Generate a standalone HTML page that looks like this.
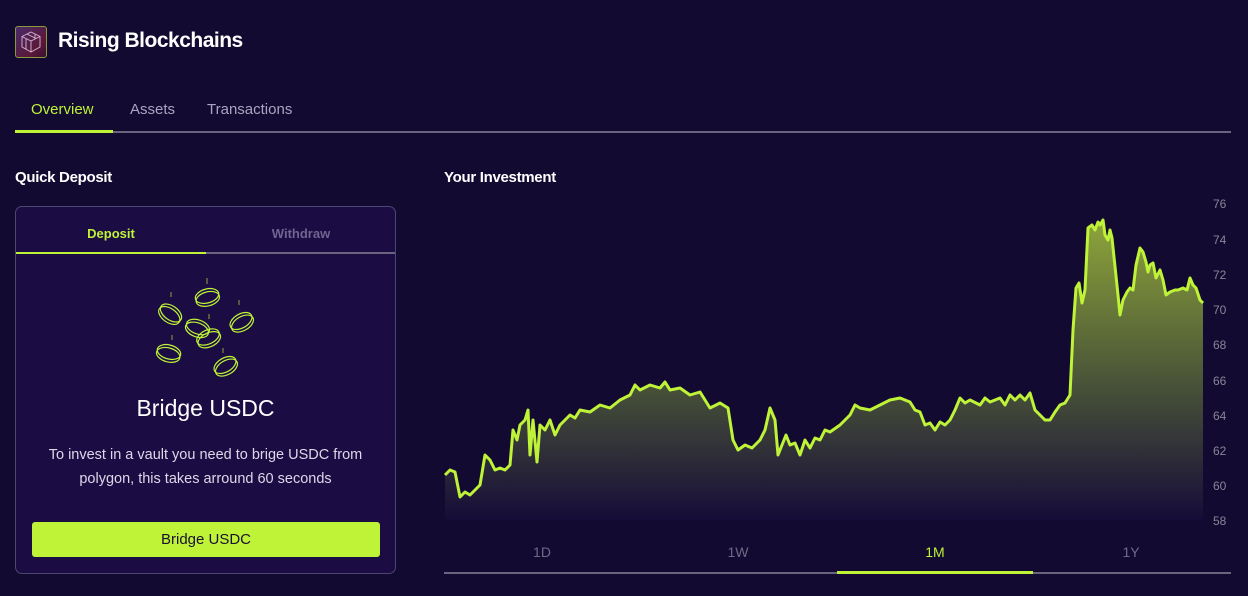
<!DOCTYPE html>
<html><head><meta charset="utf-8"><style>
*{margin:0;padding:0;box-sizing:border-box}
body{width:1248px;height:596px;background:#130a31;font-family:"Liberation Sans",sans-serif;color:#fff;position:relative;overflow:hidden}
.abs{position:absolute}
</style></head><body>
<div class="abs" style="left:15px;top:26px;width:32px;height:32px;border:1px solid #8a9a3a;border-radius:3px;background:linear-gradient(135deg,#4a2a6a,#5a1838 70%,#3a1030)">
<svg width="30" height="30" viewBox="0 0 30 30" fill="none" stroke="#d8b8d8" stroke-width="0.9"><path d="M15 5 L24 9.5 L24 20 L15 25 L6 20 L6 9.5 Z M6 9.5 L15 14 L24 9.5 M15 14 L15 25 M10 12 L10 22 M19 7 L19 12 M11 7 L20 11.5"/></svg></div>
<div class="abs" style="left:58px;top:29px;font-size:21px;font-weight:bold;letter-spacing:-0.5px">Rising Blockchains</div>
<div class="abs" style="left:31px;top:101px;font-size:15px;color:#bef337">Overview</div>
<div class="abs" style="left:130px;top:101px;font-size:15px;color:#a9a4c0">Assets</div>
<div class="abs" style="left:207px;top:101px;font-size:15px;color:#a9a4c0">Transactions</div>
<div class="abs" style="left:15px;top:131px;width:1216px;height:2px;background:#6a6480"></div>
<div class="abs" style="left:15px;top:130px;width:98px;height:3px;background:#bef337"></div>
<div class="abs" style="left:15px;top:169px;font-size:15px;font-weight:bold;letter-spacing:-0.3px">Quick Deposit</div>
<div class="abs" style="left:444px;top:169px;font-size:15px;font-weight:bold;letter-spacing:-0.3px">Your Investment</div>
<div class="abs" style="left:15px;top:206px;width:381px;height:368px;background:#1b0c44;border:1px solid #4e4570;border-radius:7px;overflow:hidden">
 <div class="abs" style="left:0;top:19px;width:190px;text-align:center;font-size:13px;font-weight:bold;color:#bef337">Deposit</div>
 <div class="abs" style="left:190px;top:19px;width:190px;text-align:center;font-size:13px;font-weight:bold;color:#6e6590">Withdraw</div>
 <div class="abs" style="left:0;top:45px;width:381px;height:2px;background:#6a6480"></div>
 <div class="abs" style="left:0;top:45px;width:190px;height:2px;background:#bef337"></div>
 <div class="abs" style="left:0;top:188px;width:379px;text-align:center;font-size:23px">Bridge USDC</div>
 <div class="abs" style="left:10px;top:236px;width:359px;text-align:center;font-size:14.5px;line-height:24px;color:#ddd8e8">To invest in a vault you need to brige USDC from polygon, this takes arround 60 seconds</div>
 <div class="abs" style="left:16px;top:315px;width:348px;height:35px;background:#bef337;border-radius:3px;color:#1a1030;font-size:15px;text-align:center;line-height:35px">Bridge USDC</div>
</div>
<svg class="abs" style="left:0;top:0" width="400" height="400" fill="none" stroke="#bef337" stroke-width="1.2">
<g transform="translate(207,296) rotate(-15)"><ellipse rx="12" ry="7"/><ellipse cy="3" rx="12" ry="7"/></g>
<g transform="translate(171,313) rotate(35)"><ellipse rx="12" ry="7"/><ellipse cy="3" rx="12" ry="7"/></g>
<g transform="translate(241,321) rotate(-30)"><ellipse rx="12" ry="7"/><ellipse cy="3" rx="12" ry="7"/></g>
<g transform="translate(198,327) rotate(20)"><ellipse rx="12" ry="7"/><ellipse cy="3" rx="12" ry="7"/></g>
<g transform="translate(208,337) rotate(-25)"><ellipse rx="12" ry="7"/><ellipse cy="3" rx="12" ry="7"/></g>
<g transform="translate(169,352) rotate(15)"><ellipse rx="12" ry="7"/><ellipse cy="3" rx="12" ry="7"/></g>
<g transform="translate(225,365) rotate(-30)"><ellipse rx="12" ry="7"/><ellipse cy="3" rx="12" ry="7"/></g>
<path d="M207 278v6M171 292v5M239 300v5M209 314v5M172 335v5M223 348v5" stroke="#7a8a40"/>
</svg>
<svg class="abs" style="left:0;top:0" width="1248" height="596">
<defs><linearGradient id="g" gradientUnits="userSpaceOnUse" x1="0" y1="220" x2="0" y2="520"><stop offset="0" stop-color="#8ea53a"/><stop offset="0.5" stop-color="#4e5a38"/><stop offset="1" stop-color="#160c38"/></linearGradient></defs>
<path fill="url(#g)" d="M445,475 L450,470 455,472 460,497 465,492 470,495 475,490 480,485 485,455 490,460 495,470 500,468 505,470 510,465 513,430 517,440 520,425 525,420 528,410 530,455 533,420 537,462 540,425 545,430 550,420 555,435 560,425 565,420 570,415 575,418 580,410 590,412 600,405 610,408 620,400 630,395 635,385 640,390 650,385 660,388 665,382 670,390 680,388 690,395 700,392 705,400 710,408 720,403 728,408 733,440 738,450 745,445 752,448 760,440 765,430 770,408 775,420 778,455 782,445 786,435 790,445 795,443 800,455 805,440 810,448 815,438 820,440 825,430 830,432 840,425 850,415 855,405 860,408 870,410 880,405 890,400 900,398 910,402 915,410 920,412 925,425 930,423 935,430 940,422 945,425 950,420 955,410 960,398 965,403 970,400 980,405 985,398 990,402 1000,398 1005,405 1010,395 1015,400 1020,395 1025,400 1030,393 1035,410 1040,415 1045,420 1050,420 1055,412 1060,405 1065,403 1070,395 1073,330 1076,288 1079,283 1082,303 1085,290 1088,228 1092,225 1095,230 1098,222 1100,225 1103,220 1105,235 1108,240 1110,230 1112,238 1118,295 1120,315 1123,300 1127,292 1130,288 1133,290 1136,265 1140,248 1143,252 1146,262 1148,272 1150,265 1153,263 1156,278 1160,270 1163,280 1166,295 1170,292 1175,290 1178,290 1183,288 1187,290 1190,278 1193,285 1196,288 1200,300 1203,303 L1203,520 L445,520 Z"/>
<polyline fill="none" stroke="#bef337" stroke-width="3" stroke-linejoin="round" points="445,475 450,470 455,472 460,497 465,492 470,495 475,490 480,485 485,455 490,460 495,470 500,468 505,470 510,465 513,430 517,440 520,425 525,420 528,410 530,455 533,420 537,462 540,425 545,430 550,420 555,435 560,425 565,420 570,415 575,418 580,410 590,412 600,405 610,408 620,400 630,395 635,385 640,390 650,385 660,388 665,382 670,390 680,388 690,395 700,392 705,400 710,408 720,403 728,408 733,440 738,450 745,445 752,448 760,440 765,430 770,408 775,420 778,455 782,445 786,435 790,445 795,443 800,455 805,440 810,448 815,438 820,440 825,430 830,432 840,425 850,415 855,405 860,408 870,410 880,405 890,400 900,398 910,402 915,410 920,412 925,425 930,423 935,430 940,422 945,425 950,420 955,410 960,398 965,403 970,400 980,405 985,398 990,402 1000,398 1005,405 1010,395 1015,400 1020,395 1025,400 1030,393 1035,410 1040,415 1045,420 1050,420 1055,412 1060,405 1065,403 1070,395 1073,330 1076,288 1079,283 1082,303 1085,290 1088,228 1092,225 1095,230 1098,222 1100,225 1103,220 1105,235 1108,240 1110,230 1112,238 1118,295 1120,315 1123,300 1127,292 1130,288 1133,290 1136,265 1140,248 1143,252 1146,262 1148,272 1150,265 1153,263 1156,278 1160,270 1163,280 1166,295 1170,292 1175,290 1178,290 1183,288 1187,290 1190,278 1193,285 1196,288 1200,300 1203,303"/>
<g font-family="Liberation Sans" font-size="12" fill="#8a8598">
<text x="1213" y="208">76</text><text x="1213" y="244">74</text><text x="1213" y="279">72</text><text x="1213" y="314">70</text><text x="1213" y="349">68</text><text x="1213" y="385">66</text><text x="1213" y="420">64</text><text x="1213" y="455">62</text><text x="1213" y="490">60</text><text x="1213" y="525">58</text>
</g>
<g font-family="Liberation Sans" font-size="14" text-anchor="middle">
<text x="542" y="557" fill="#6e6a85">1D</text><text x="738" y="557" fill="#6e6a85">1W</text><text x="935" y="557" fill="#bef337">1M</text><text x="1131" y="557" fill="#6e6a85">1Y</text>
</g>
<rect x="444" y="572" width="787" height="2" fill="#6a6480"/>
<rect x="837" y="571" width="196" height="3" fill="#bef337"/>
</svg>
</body></html>
